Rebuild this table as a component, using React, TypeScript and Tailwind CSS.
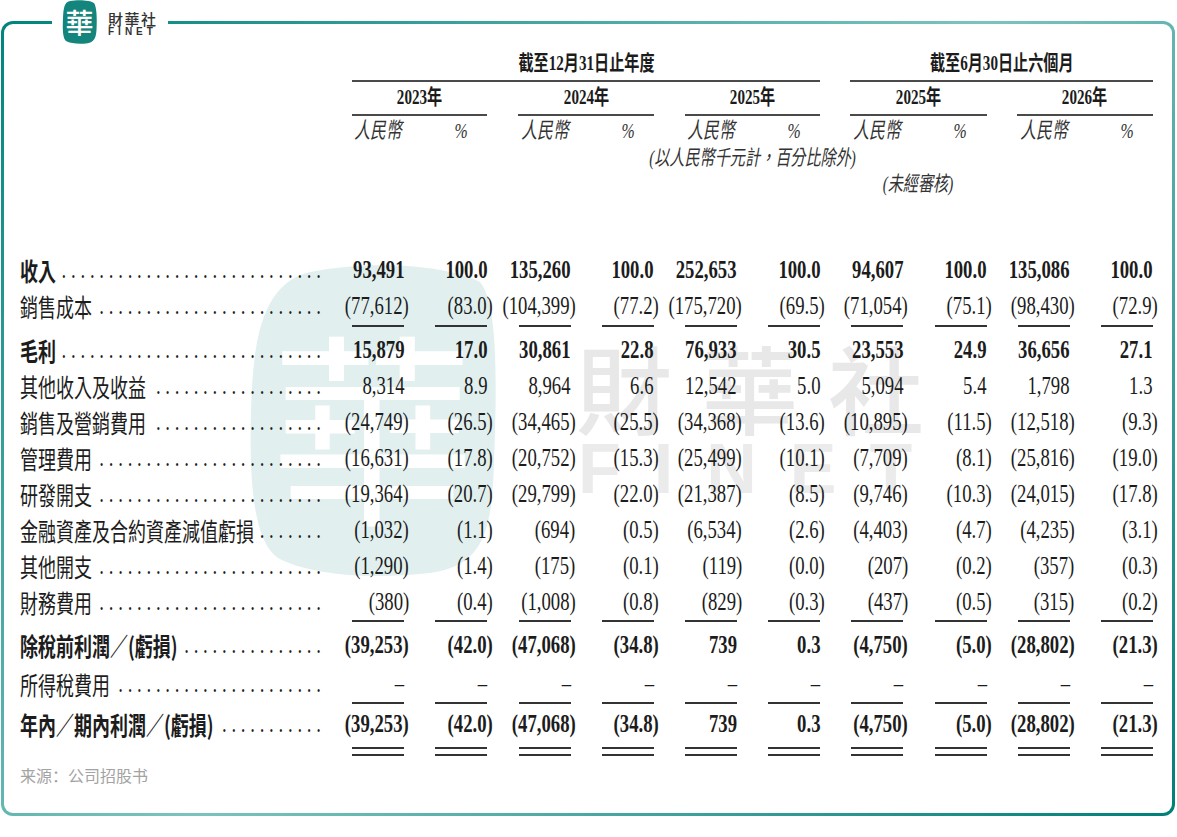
import clsx from 'clsx'

type Row = {
  label: string
  values: string[]
  bold?: boolean
}

const rowsTop: Row[] = [
  { label: '收入', bold: true, values: ['93,491', '100.0', '135,260', '100.0', '252,653', '100.0', '94,607', '100.0', '135,086', '100.0'] },
  { label: '銷售成本', values: ['(77,612)', '(83.0)', '(104,399)', '(77.2)', '(175,720)', '(69.5)', '(71,054)', '(75.1)', '(98,430)', '(72.9)'] },
]

const rowsMid: Row[] = [
  { label: '毛利', bold: true, values: ['15,879', '17.0', '30,861', '22.8', '76,933', '30.5', '23,553', '24.9', '36,656', '27.1'] },
  { label: '其他收入及收益', values: ['8,314', '8.9', '8,964', '6.6', '12,542', '5.0', '5,094', '5.4', '1,798', '1.3'] },
  { label: '銷售及營銷費用', values: ['(24,749)', '(26.5)', '(34,465)', '(25.5)', '(34,368)', '(13.6)', '(10,895)', '(11.5)', '(12,518)', '(9.3)'] },
  { label: '管理費用', values: ['(16,631)', '(17.8)', '(20,752)', '(15.3)', '(25,499)', '(10.1)', '(7,709)', '(8.1)', '(25,816)', '(19.0)'] },
  { label: '研發開支', values: ['(19,364)', '(20.7)', '(29,799)', '(22.0)', '(21,387)', '(8.5)', '(9,746)', '(10.3)', '(24,015)', '(17.8)'] },
  { label: '金融資產及合約資產減值虧損', values: ['(1,032)', '(1.1)', '(694)', '(0.5)', '(6,534)', '(2.6)', '(4,403)', '(4.7)', '(4,235)', '(3.1)'] },
  { label: '其他開支', values: ['(1,290)', '(1.4)', '(175)', '(0.1)', '(119)', '(0.0)', '(207)', '(0.2)', '(357)', '(0.3)'] },
  { label: '財務費用', values: ['(380)', '(0.4)', '(1,008)', '(0.8)', '(829)', '(0.3)', '(437)', '(0.5)', '(315)', '(0.2)'] },
]

const loss = ['(39,253)', '(42.0)', '(47,068)', '(34.8)', '739', '0.3', '(4,750)', '(5.0)', '(28,802)', '(21.3)']
const dashes = Array(10).fill('–')

const grid = 'grid grid-cols-[301px_repeat(10,83.2px)]'

// leader dots: how many fit after the label (widths in unscaled px, pitch 13.1)
function dotsFor(label: string) {
  let w = 0
  for (const ch of label) w += ch === '(' || ch === ')' ? 8.5 : 25
  const n = Math.floor((418 - w - 2 + 6.6) / 13.1)
  return '.'.repeat(Math.max(n, 0))
}

function Label({ text, bold }: { text: string; bold?: boolean }) {
  return (
    <div className="min-w-0">
      <div className="flex w-[418px] origin-left scale-x-[0.72] leading-[36px]">
        <span className={clsx("whitespace-nowrap font-['Noto_Sans_CJK_TC',sans-serif] text-[25px]", bold && 'font-bold')}>
          {text}
        </span>
        <span className="flex min-w-0 flex-1 justify-end">
          <span className="-mr-[6.6px] whitespace-nowrap font-['Liberation_Serif',serif] text-[26px] tracking-[6.6px]">
            {dotsFor(text)}
          </span>
        </span>
      </div>
    </div>
  )
}

function Num({ v, bold }: { v: string; bold?: boolean }) {
  return (
    <div className="flex justify-end whitespace-nowrap leading-[36px]">
      <span
        className={clsx(
          "inline-block origin-right scale-x-[0.72] font-['Liberation_Serif',serif] text-[26px]",
          bold && 'font-bold',
          v.startsWith('(') && '-mr-[5px]'
        )}
      >
        {v}
      </span>
    </div>
  )
}

function DataRow({ row, className }: { row: Row; className?: string }) {
  return (
    <div className={clsx(grid, 'h-[36px]', className)}>
      <Label text={row.label} bold={row.bold} />
      {row.values.map((v, i) => (
        <Num key={i} v={v} bold={row.bold} />
      ))}
    </div>
  )
}

function Rules({ className, double }: { className?: string; double?: boolean }) {
  return (
    <div className={clsx(grid, className)}>
      <div />
      {Array.from({ length: 10 }).map((_, i) => (
        <div key={i} className="flex flex-col items-end gap-[5px]">
          <div className="h-[2px] w-[52px] bg-[#333]" />
          {double && <div className="h-[2px] w-[52px] bg-[#333]" />}
        </div>
      ))}
    </div>
  )
}

function Head({ children, className }: { children: React.ReactNode; className?: string }) {
  return (
    <span className={clsx("inline-block scale-x-[0.72] whitespace-nowrap font-['Liberation_Serif','Noto_Sans_CJK_TC',serif]", className)}>
      {children}
    </span>
  )
}

function Watermark() {
  return (
    <div className="pointer-events-none absolute inset-0" aria-hidden="true">
      <div className="absolute left-[244px] top-[238px] h-[315px] w-[249px]">
        <svg viewBox="0 0 249 315" className="h-full w-full">
          <path
            d="M62 10 C120 -2 198 2 232 20 C250 40 249 120 246 200 C244 268 236 304 182 311 C122 318 62 313 30 296 C6 280 1 222 3 150 C5 82 12 22 62 10 Z"
            fill="#e1f0ef"
          />
        </svg>
        <div className="absolute inset-0 flex items-center justify-center font-['Noto_Sans_CJK_TC',sans-serif] text-[205px] font-normal leading-none text-white">
          華
        </div>
      </div>
      <div className="absolute left-[572px] top-[314px] font-['Noto_Sans_CJK_TC',sans-serif] text-[96px] font-medium leading-none tracking-[30px] text-[#e8e8e8]">
        財華社
      </div>
      <div className="absolute left-[574px] top-[410px] font-['Liberation_Sans',sans-serif] text-[70px] font-bold leading-none tracking-[33px] text-[#ebebeb]">
        FINET
      </div>
    </div>
  )
}

function Logo() {
  return (
    <div className="absolute left-[52px] top-0 flex h-[44px] w-[116px] bg-white">
      <div className="relative ml-[10px] h-[44px] w-[35px]">
        <svg viewBox="0 0 35 44" className="h-full w-full">
          <path
            d="M8 1 C16 -0.5 28 0 32 3 C35 7 35 20 34.5 30 C34 38 32 43 24 43.5 C16 44 8 43.5 4 41 C0.5 38 0.5 28 1 18 C1.5 9 2 2 8 1 Z"
            fill="#14857d"
          />
        </svg>
        <div className="absolute inset-0 flex items-center justify-center font-['Noto_Sans_CJK_TC',sans-serif] text-[28px] font-medium leading-none text-white">
          華
        </div>
      </div>
      <div className="ml-[11px] flex flex-col pt-[11px]">
        <span className="font-['Noto_Sans_CJK_TC',sans-serif] text-[15px] font-medium leading-[15px] tracking-[1.5px] text-[#333]">
          財華社
        </span>
        <span className="mt-[1px] font-['Liberation_Sans',sans-serif] text-[10px] font-bold leading-[10px] tracking-[4px] text-[#333]">
          FINET
        </span>
      </div>
    </div>
  )
}

export default function App() {
  const years = ['2023年', '2024年', '2025年', '2025年', '2026年']

  return (
    <div className="relative h-[837px] w-[1177px] overflow-hidden bg-white pl-[1px] pt-[21px] text-[#1c1c1c]">
      <div className="h-[795px] w-[1174px] rounded-[12px] bg-[linear-gradient(135deg,#00847e_0%,#7cc3be_50%,#007f79_100%)] p-[3px]">
        <div className="relative h-full overflow-hidden rounded-[9px] bg-white">
          <Watermark />

          <div className="relative pl-[16px] pt-[26px]">
            {/* period headings */}
            <div className={grid}>
              <div className="col-span-6 col-start-2 pl-[31px]">
                <div className="flex h-[32px] justify-center border-b-2 border-[#4a4a4a] leading-[26px]">
                  <Head className="text-[21px] font-bold">截至12月31日止年度</Head>
                </div>
              </div>
              <div className="col-span-4 col-start-8 pl-[30px]">
                <div className="flex h-[32px] justify-center border-b-2 border-[#4a4a4a] leading-[26px]">
                  <Head className="text-[21px] font-bold">截至6月30日止六個月</Head>
                </div>
              </div>
            </div>

            {/* years */}
            <div className={grid}>
              {years.map((y, i) => (
                <div key={i} className={clsx('col-span-2', i === 0 && 'col-start-2', i < 3 ? 'pl-[31px]' : 'pl-[30px]')}>
                  <div className="flex h-[34px] justify-center border-b-2 border-[#4a4a4a] pt-[2px] leading-[26px]">
                    <Head className="text-[21px] font-bold">{y}</Head>
                  </div>
                </div>
              ))}
            </div>

            {/* currency / percent */}
            <div className={clsx(grid, 'h-[28px] pt-[2px] leading-[26px]')}>
              <div />
              {Array.from({ length: 10 }).map((_, i) => (
                <div key={i} className="flex justify-end">
                  <div className="flex w-[52px] justify-center">
                    <Head className="text-[22px] italic text-[#333]">{i % 2 === 0 ? '人民幣' : '%'}</Head>
                  </div>
                </div>
              ))}
            </div>

            <div className={clsx(grid, 'mt-[1px] h-[26px] leading-[26px]')}>
              <div className="col-span-10 col-start-2 flex justify-center pl-[31px]">
                <Head className="text-[21px] italic text-[#333]">(以人民幣千元計，百分比除外)</Head>
              </div>
            </div>

            <div className={clsx(grid, 'h-[26px] leading-[26px]')}>
              <div className="col-span-2 col-start-8 flex justify-center pl-[30px]">
                <Head className="text-[21px] italic text-[#333]">(未經審核)</Head>
              </div>
            </div>

            {/* figures */}
            <div className="mt-[55px]">
              {rowsTop.map((r) => (
                <DataRow key={r.label} row={r} />
              ))}
              <Rules className="h-[8px] pt-[1px]" />
              {rowsMid.map((r) => (
                <DataRow key={r.label} row={r} />
              ))}
              <Rules className="h-[7px]" />
              <DataRow row={{ label: '除稅前利潤／(虧損)', bold: true, values: loss }} />
              <DataRow row={{ label: '所得稅費用', values: dashes }} className="mt-[3px]" />
              <Rules className="h-[4px]" />
              <DataRow row={{ label: '年內／期內利潤／(虧損)', bold: true, values: loss }} />
              <Rules className="mt-[5px]" double />
            </div>

            <div className="mt-[10px] font-['Noto_Sans_CJK_SC',sans-serif] text-[16px] leading-[18px] text-[#a3a3a3]">
              来源：公司招股书
            </div>
          </div>
        </div>
      </div>
      <Logo />
    </div>
  )
}
